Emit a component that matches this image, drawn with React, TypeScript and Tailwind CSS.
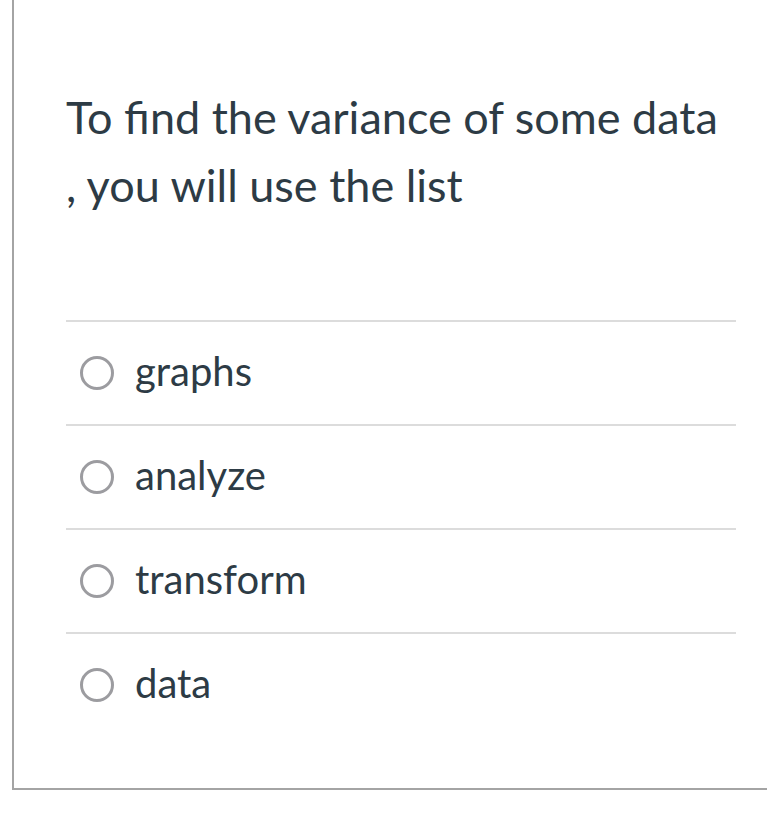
import React from "react";

const options = ["graphs", "analyze", "transform", "data"];

export default function App() {
  return (
    <div className="min-h-[835px] bg-white pl-3 overflow-hidden" style={{ fontFamily: "Lato, 'Open Sans', sans-serif" }}>
      <div className="w-[800px] border-l-2 border-b-2 border-[#a4a4a4] pt-[83px] pb-[52px] pl-[52px] pr-[64px] text-[#2d3b45]">
        <div className="w-[680px] text-[45px] leading-[68px] font-normal">
          To find the variance of some data
          <br />
          , you will use the list
        </div>
        <div className="mt-[101px] w-[670px]">
          {options.map((o) => (
            <div
              key={o}
              className="flex items-center h-[104px] pl-[14px] border-t-2 border-[#dcdcdc]"
            >
              <span className="box-border w-[34px] h-[34px] rounded-full border-[3px] border-[#9c9ca0] shrink-0" />
              <span className="ml-[21px] text-[40px] leading-none -mt-[4px]">{o}</span>
            </div>
          ))}
        </div>
      </div>
    </div>
  );
}
